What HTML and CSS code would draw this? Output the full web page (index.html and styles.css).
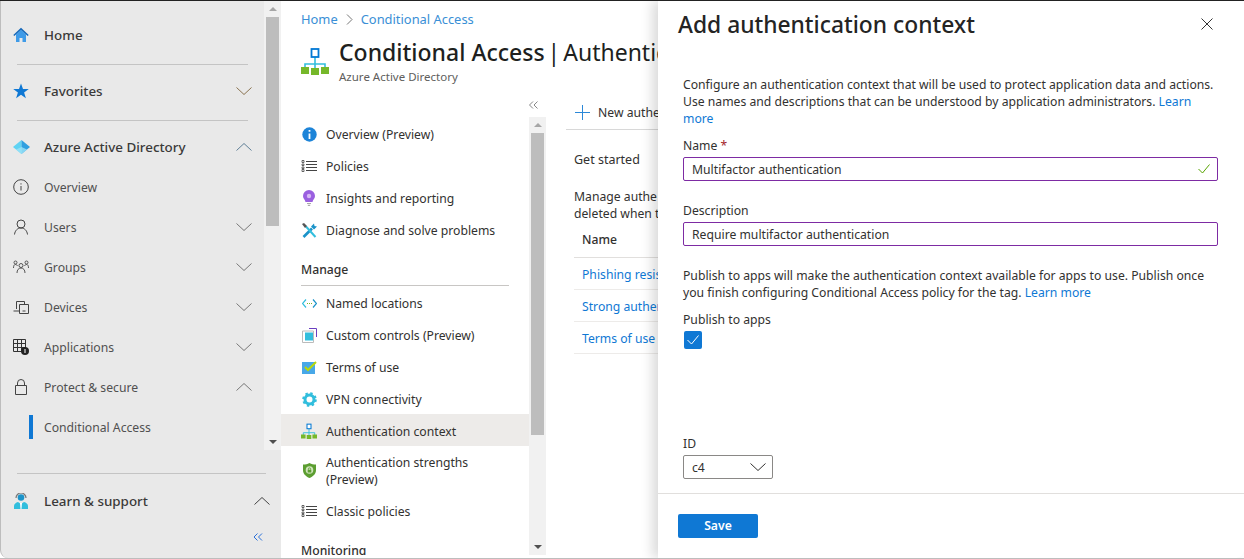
FILE: index.html
```html
<!DOCTYPE html>
<html lang="en">
<head>
    <title>Conditional Access | Authentication context</title>
    <link rel="stylesheet" href="styles.css">
</head>
<body>
<svg class="defs" width="0" height="0">
    <symbol id="chev-down" viewBox="0 0 16 8"><path d="M.5.5 8 7.5 15.5.5" fill="none" stroke="currentColor"/></symbol>
    <symbol id="chev-up" viewBox="0 0 16 8"><path d="M.5 7.5 8 .5l7.5 7" fill="none" stroke="currentColor"/></symbol>
    <symbol id="list" viewBox="0 0 16 12"><path d="M5 1.500h11M5 4.500h11M5 7.500h11M5 10.500h11" stroke="#444"/><path d="M1 .5h2v2H1zM1 4h2v1.500H1zM1 7h2v1.500H1zM1 9.500h2v2H1z" fill="none" stroke="#444" stroke-width=".8"/></symbol>
    <symbol id="tree" viewBox="0 0 28 28"><path d="M14 10v7M4 21v-4h20v4M14 17v4" fill="none" stroke="#32bedd" stroke-width="1.600"/><rect x="10.500" y="2" width="7" height="8" fill="#fff" stroke="#0078d4" stroke-width="1.800"/><path d="M0 20h8v7H0zM10 21h8v7h-8zM20 20h8v7h-8z" fill="#76b82a"/></symbol>
</svg>
<div class="window">
    <aside class="side">
        <div class="side-top">
            <nav class="side-list">
                <a class="nav-row nav-strong nav-first">
                    <span class="nav-icon"><svg width="16" height="16" viewBox="0 0 16 16"><path d="M3 7.500V15h3.500v-4h3v4H13V7.500L8 2.500z" fill="#3f9be8"/><path d="M.3 8 8 .8 15.700 8l-1 .9L8 2.800 1.300 8.900z" fill="#1467b8"/></svg></span>
                    <span>Home</span>
                </a>
                <div class="nav-rule"></div>
                <a class="nav-row nav-strong">
                    <span class="nav-icon"><svg width="16" height="16" viewBox="0 0 16 16"><path d="M8 .5 10 6h5.800l-4.700 3.500 1.800 5.800L8 11.800l-4.900 3.500 1.800-5.800L.2 6H6z" fill="#0f78d4"/></svg></span>
                    <span class="nav-text">Favorites</span>
                    <svg class="chev chev-warm" width="16" height="8"><use href="#chev-down"/></svg>
                </a>
                <div class="nav-rule"></div>
                <a class="nav-row nav-strong">
                    <span class="nav-icon"><svg width="17" height="14" viewBox="0 0 17 14"><path d="M8.500 0 0 7l8.500 7z" fill="#5fd3f3"/><path d="M8.500 0 17 7l-8.500 7z" fill="#2f9fe0"/><path d="M8.500 7 3 9.500 8.500 14 14 9.500z" fill="#9be4f7" opacity=".8"/></svg></span>
                    <span class="nav-text">Azure Active Directory</span>
                    <svg class="chev chev-cool" width="16" height="8"><use href="#chev-up"/></svg>
                </a>
                <a class="nav-row nav-tight">
                    <span class="nav-icon"><svg width="16" height="16" viewBox="0 0 16 16"><circle cx="8" cy="8" r="7.300" fill="none" stroke="#444"/><path d="M8 7v4.500M8 4.300v1.200" stroke="#444"/></svg></span>
                    <span class="nav-text">Overview</span>
                </a>
                <a class="nav-row">
                    <span class="nav-icon"><svg width="16" height="16" viewBox="0 0 16 16"><circle cx="8" cy="5" r="4" fill="none" stroke="#444"/><path d="M1.500 15.500c.5-4 3-6.500 6.500-6.500s6 2.500 6.500 6.500" fill="none" stroke="#444"/></svg></span>
                    <span class="nav-text">Users</span>
                    <svg class="chev" width="16" height="8"><use href="#chev-down"/></svg>
                </a>
                <a class="nav-row">
                    <span class="nav-icon"><svg width="16" height="14" viewBox="0 0 16 14"><g fill="none" stroke="#444" stroke-width=".9"><circle cx="8" cy="5.500" r="2"/><circle cx="2.500" cy="2.500" r="1.500"/><circle cx="13.500" cy="2.500" r="1.500"/><path d="M4 13c0-3 1.500-5 4-5s4 2 4 5M.5 8c0-2 .5-3.500 2-3.500 1 0 1.500.5 2 1.500M15.500 8c0-2-.5-3.500-2-3.500-1 0-1.500.5-2 1.500"/></g></svg></span>
                    <span class="nav-text">Groups</span>
                    <svg class="chev" width="16" height="8"><use href="#chev-down"/></svg>
                </a>
                <a class="nav-row">
                    <span class="nav-icon"><svg width="16" height="13" viewBox="0 0 16 13"><g fill="none" stroke="#444"><path d="M3.500 8V.5h8V3M.5 10h6"/><path d="M6.500 3.500h9v9h-9z" fill="#e9e9e9"/><path d="M9.500 10h3"/></g></svg></span>
                    <span class="nav-text">Devices</span>
                    <svg class="chev" width="16" height="8"><use href="#chev-down"/></svg>
                </a>
                <a class="nav-row">
                    <span class="nav-icon"><svg width="16" height="16" viewBox="0 0 16 16"><g fill="none" stroke="#333"><path d="M.5.500h12v12H.5zM.5 4.500h12M.5 8.500h12M4.500.5v12M8.500.5v12"/></g><circle cx="12" cy="12" r="4" fill="#222"/><path d="M12 10v4" stroke="#fff"/></svg></span>
                    <span class="nav-text">Applications</span>
                    <svg class="chev" width="16" height="8"><use href="#chev-down"/></svg>
                </a>
                <a class="nav-row">
                    <span class="nav-icon"><svg width="12" height="16" viewBox="0 0 12 16"><path d="M.5 6.500h11v9H.5zM2.500 6.500V4a3.500 3.500 0 0 1 7 0v2.500" fill="none" stroke="#444"/></svg></span>
                    <span class="nav-text">Protect &amp; secure</span>
                    <svg class="chev" width="16" height="8"><use href="#chev-up"/></svg>
                </a>
                <a class="nav-row nav-sub">
                    <span class="nav-bar"></span>
                    <span class="nav-text">Conditional Access</span>
                </a>
            </nav>
            <div class="scrollbar side-scrollbar">
                <span class="arrow-up"></span>
                <span class="thumb side-thumb"></span>
                <span class="arrow-down"></span>
            </div>
        </div>
        <div class="nav-rule nav-rule-wide"></div>
        <a class="nav-row nav-strong nav-learn">
            <span class="nav-icon"><svg width="14" height="16" viewBox="0 0 14 16"><path d="M0 16v-3c0-2 2-3.500 4-4l3 2 3-2c2 .5 4 2 4 4v3z" fill="#32bedd"/><path d="M6 10h2l-.5 6h-1z" fill="#fff"/><circle cx="7" cy="4.500" r="3.300" fill="#1b93c9"/><path d="M2 5a5 5 0 0 1 10 0" fill="none" stroke="#777" stroke-width="1.200"/></svg></span>
            <span class="nav-text">Learn &amp; support</span>
            <svg class="chev chev-dark" width="16" height="8"><use href="#chev-up"/></svg>
        </a>
        <div class="side-collapse">
            <svg width="10" height="8" viewBox="0 0 10 8"><path d="M4.500.5 1 4l3.500 3.500M9 .5 5.500 4 9 7.500" fill="none" stroke="#2b70d8"/></svg>
        </div>
    </aside>

    <main class="main">
        <header class="main-head">
            <div class="crumbs"><a>Home</a><svg width="7" height="11" viewBox="0 0 7 11"><path d="m1 .5 5 5-5 5" fill="none" stroke="#777"/></svg><a>Conditional Access</a></div>
            <div class="title-row">
                <svg class="title-icon" width="28" height="28"><use href="#tree"/></svg>
                <div>
                    <h1 class="title"><b>Conditional Access</b> <span class="title-rest">| Authentic</span></h1>
                    <div class="subtitle">Azure Active Directory</div>
                </div>
            </div>
        </header>
        <div class="main-body">
            <div class="menu-col">
                <div class="menu-collapse"><svg width="9" height="8" viewBox="0 0 9 8"><path d="M4 .5.500 4 4 7.500M8.500.5 5 4l3.500 3.500" fill="none" stroke="#888"/></svg></div>
                <div class="menu-wrap">
                    <ul class="menu">
                        <li class="menu-item"><span class="menu-icon"><svg width="15" height="15" viewBox="0 0 15 15"><circle cx="7.500" cy="7.500" r="7.200" fill="#1d84d8"/><path d="M7.500 6.500V12M7.500 3v1.800" stroke="#fff" stroke-width="1.800"/></svg></span>Overview (Preview)</li>
                        <li class="menu-item"><span class="menu-icon"><svg width="16" height="12"><use href="#list"/></svg></span>Policies</li>
                        <li class="menu-item"><span class="menu-icon"><svg width="12" height="16" viewBox="0 0 12 16"><path d="M6 0a6 6 0 0 1 6 6c0 2.500-2 3.500-2.500 6h-7C2 9.500 0 8.500 0 6a6 6 0 0 1 6-6z" fill="#9a5fe0"/><circle cx="6" cy="6" r="2.200" fill="#d7b8f5"/><path d="M4 13.500h4M4.800 15.300h2.400" stroke="#aaa" stroke-width="1.200"/></svg></span>Insights and reporting</li>
                        <li class="menu-item"><span class="menu-icon"><svg width="15" height="15" viewBox="0 0 15 15"><path d="M1.500 14 10 5.500" stroke="#1b93c9" stroke-width="2.600"/><path d="M13.500 14 4 3.500" stroke="#32bedd" stroke-width="2"/><path d="M9 3.500 12 .5l.5 2.500 2.500.5-3 3z" fill="#1b93c9"/><path d="M0 1l2-1 3 3-2 2z" fill="#555"/></svg></span>Diagnose and solve problems</li>
                        <li class="menu-head">Manage</li>
                        <li class="menu-item"><span class="menu-icon"><svg width="15" height="9" viewBox="0 0 15 9"><path d="M4 .5.500 4.500 4 8.500" fill="none" stroke="#32bedd" stroke-width="1.200"/><path d="m11 .5 3.500 4-3.500 4" fill="none" stroke="#1b93c9" stroke-width="1.200"/><path d="M5 4.500h1M7 4.500h1M9 4.500h1" stroke="#76b82a"/></svg></span>Named locations</li>
                        <li class="menu-item"><span class="menu-icon"><svg width="15" height="15" viewBox="0 0 15 15"><path d="M.5 3h11v11.500H.5z" fill="#fff" stroke="#bbb"/><path d="M3 4.500h8v8H3z" fill="#32bedd"/><path d="M7 .5h7.500V9" fill="none" stroke="#6b3fc0"/></svg></span>Custom controls (Preview)</li>
                        <li class="menu-item"><span class="menu-icon"><svg width="15" height="13" viewBox="0 0 15 13"><path d="M0 1h13v12H0z" fill="#48a8e8"/><path d="m3 6 3 3 8-8" fill="none" stroke="#bad80a" stroke-width="2"/></svg></span>Terms of use</li>
                        <li class="menu-item"><span class="menu-icon"><svg width="15" height="15" viewBox="0 0 15 15"><circle cx="7.500" cy="7.500" r="4.500" fill="#fff" stroke="#32bedd" stroke-width="3"/><circle cx="7.500" cy="7.500" r="6.200" fill="none" stroke="#32bedd" stroke-width="2.200" stroke-dasharray="2.400 2.470"/></svg></span>VPN connectivity</li>
                        <li class="menu-item menu-active"><span class="menu-icon"><svg width="16" height="16" viewBox="0 0 28 28"><use href="#tree"/></svg></span>Authentication context</li>
                        <li class="menu-item menu-item-tall"><span class="menu-icon"><svg width="13" height="15" viewBox="0 0 13 15"><path d="M6.500 0c2 1.200 4 1.500 6.500 1.500V7c0 4-3 6.500-6.500 8C3 13.500 0 11 0 7V1.500C2.500 1.500 4.500 1.200 6.500 0z" fill="#5c9e31"/><circle cx="6.500" cy="7" r="3.800" fill="#cfe3bb"/><path d="M4.700 6.800h3.600v2.700H4.700z" fill="#5c9e31"/><path d="M5.400 6.800V6a1.100 1.100 0 0 1 2.200 0v.8" fill="none" stroke="#5c9e31" stroke-width=".8"/></svg></span><span>Authentication strengths<br>(Preview)</span></li>
                        <li class="menu-item menu-item-last"><span class="menu-icon"><svg width="16" height="12"><use href="#list"/></svg></span>Classic policies</li>
                        <li class="menu-head menu-head-plain">Monitoring</li>
                    </ul>
                    <div class="scrollbar menu-scrollbar">
                        <span class="arrow-up"></span>
                        <span class="thumb menu-thumb"></span>
                        <span class="arrow-down"></span>
                    </div>
                </div>
            </div>
            <section class="content">
                <div class="toolbar"><svg width="15" height="15" viewBox="0 0 15 15"><path d="M7.500 0v15M0 7.500h15" stroke="#2b88d8"/></svg>New authe</div>
                <div class="content-inner">
                    <h2 class="get-started">Get started</h2>
                    <p class="intro">Manage authe<br>deleted when t</p>
                    <div class="table-head">Name</div>
                    <div class="table-row"><a>Phishing resis</a></div>
                    <div class="table-row"><a>Strong authen</a></div>
                    <div class="table-row"><a>Terms of use</a></div>
                </div>
            </section>
        </div>
    </main>

    <aside class="panel">
        <header class="panel-head">
            <h2 class="panel-title">Add authentication context</h2>
            <svg width="12" height="12" viewBox="0 0 12 12"><path d="m.5.500 11 11M11.500.5l-11 11" stroke="#333"/></svg>
        </header>
        <form class="panel-body" action="">
            <p class="panel-text">Configure an authentication context that will be used to protect application data and actions. Use names and descriptions that can be understood by application administrators. <a>Learn more</a></p>
            <label class="field-label field-name">Name <span class="req">*</span></label>
            <div class="input input-check">Multifactor authentication<svg width="12" height="10" viewBox="0 0 12 10"><path d="m.5 5 4 4L11.500.5" fill="none" stroke="#57a300"/></svg></div>
            <label class="field-label field-desc">Description</label>
            <div class="input">Require multifactor authentication</div>
            <p class="panel-text panel-text-publish">Publish to apps will make the authentication context available for apps to use. Publish once you finish configuring Conditional Access policy for the tag. <a>Learn more</a></p>
            <label class="field-label field-publish">Publish to apps</label>
            <span class="checkbox"><svg width="12" height="10" viewBox="0 0 12 10"><path d="m.5 5 4 4L11.500.5" fill="none" stroke="#fff"/></svg></span>
            <label class="field-label field-id">ID</label>
            <div class="select">c4<svg width="16" height="8"><use href="#chev-down"/></svg></div>
        </form>
        <footer class="panel-foot"><button type="button" class="save">Save</button></footer>
    </aside>
</div>
</body>
</html>
```
FILE: styles.css
```css
html, body {
    margin: 0;
    height: 100%;
    overflow: hidden;
}

body {
    font-family: "Noto Sans", "Open Sans", sans-serif;
    font-size: 12.2px;
    color: #323130;
    background: #fff;
}

.defs {
    position: absolute;
}

h1, h2, p, ul {
    margin: 0;
    padding: 0;
}

a {
    color: #0f78d4;
}

.window {
    display: flex;
    height: 559px;
    box-sizing: border-box;
    border-top: 1px solid #222;
    border-bottom: 1px solid #bdbdbd;
    overflow: hidden;
}

/* left nav */
.side {
    width: 281px;
    flex: none;
    display: flex;
    flex-direction: column;
    background: #e9e9e9;
    border-left: 1px solid #bdbdbd;
    border-bottom-left-radius: 8px;
    box-sizing: border-box;
}

.side-top {
    display: flex;
    height: 449px;
    flex: none;
}

.side-list {
    flex: 1;
    padding-top: 13px;
    min-width: 0;
    overflow: hidden;
}

.nav-row {
    display: flex;
    align-items: center;
    height: 40px;
    padding-left: 10px;
    padding-right: 12px;
    color: #505050;
}

.nav-strong {
    color: #3b3a39;
    font-size: 13.4px;
    font-weight: 500;
    height: 38px;
    padding-top: 2px;
}

.nav-tight {
    margin-top: 1px;
}

.nav-icon {
    width: 20px;
    margin-right: 13px;
    display: flex;
    justify-content: center;
    flex: none;
}

.nav-text {
    flex: 1;
}

.nav-sub {
    padding-left: 28px;
}

.nav-bar {
    width: 4px;
    height: 24px;
    background: #0f78d4;
    margin-right: 11px;
}

.chev {
    color: #777;
    flex: none;
}

.chev-warm {
    color: #8a7350;
}

.chev-cool {
    color: #5f7f96;
}

.chev-dark {
    color: #444;
}

.nav-rule {
    height: 1px;
    background: #c4c4c4;
    margin: 10px 16px 5px 16px;
}

.nav-rule-wide {
    margin: 23px 15px 6px 16px;
}

.nav-learn {
    padding-right: 11px;
}

.side-collapse {
    display: flex;
    justify-content: flex-end;
    padding: 13px 18px 0 0;
}

/* scrollbars */
.scrollbar {
    display: flex;
    flex-direction: column;
    align-items: center;
    width: 17px;
    flex: none;
    background: #f1f1f1;
}

.thumb {
    background: #bdbdbd;
    width: 13px;
    flex: none;
}

.arrow-up, .arrow-down {
    width: 0;
    height: 0;
    border-left: 4px solid transparent;
    border-right: 4px solid transparent;
    margin: 6px 0;
}

.arrow-up {
    border-bottom: 4px solid #a6a6a6;
}

.arrow-down {
    border-top: 4px solid #505050;
    margin-top: auto;
}

.side-thumb {
    height: 209px;
}

.menu-thumb {
    height: 302px;
}

/* main blade */
.main {
    width: 377px;
    flex: none;
    display: flex;
    flex-direction: column;
    overflow: hidden;
}

.main-head {
    padding: 10px 0 0 20px;
    height: 96px;
    box-sizing: border-box;
    white-space: nowrap;
}

.crumbs {
    display: flex;
    align-items: center;
    gap: 8px;
    font-size: 12.900px;
    height: 16px;
}

.crumbs a {
    color: #3a8fd6;
}

.title-row {
    display: flex;
    align-items: flex-start;
    margin-top: 9px;
}

.title-icon {
    margin: 11px 10px 0 0;
    flex: none;
}

.title {
    font-size: 23px;
    font-weight: 400;
    line-height: 33px;
    color: #201f1e;
}

.title b {
    font-weight: 500;
}

.title-rest {
    margin-left: -3px;
    word-spacing: -3px;
}

.subtitle {
    font-size: 11.500px;
    color: #605e5c;
    line-height: 16px;
}

.main-body {
    display: flex;
    flex: 1;
    min-height: 0;
}

.menu-col {
    width: 265px;
    flex: none;
    display: flex;
    flex-direction: column;
}

.menu-collapse {
    height: 20px;
    padding: 4px 8px 0 0;
    box-sizing: border-box;
    display: flex;
    justify-content: flex-end;
}

.menu-wrap {
    display: flex;
    flex: 1;
    min-height: 0;
    padding-bottom: 3px;
}

.menu {
    list-style: none;
    width: 248px;
    flex: none;
    overflow: hidden;
}

.menu-item {
    display: flex;
    align-items: center;
    height: 30px;
    padding: 2px 0 0 20px;
    color: #323130;
}

.menu-item-tall {
    height: 49px;
    padding-top: 0;
}

.menu-item-last {
    height: 32px;
    padding-top: 0;
}

.menu-active {
    background: #edebe9;
}

.menu-icon {
    width: 16px;
    margin-right: 9px;
    display: flex;
    justify-content: center;
    flex: none;
}

.menu-head {
    display: flex;
    align-items: center;
    height: 32px;
    margin: 8px 20px 0 20px;
    font-weight: 500;
    border-bottom: 1px solid #c8c6c4;
}

.menu-head-plain {
    border-bottom: 0;
    margin-top: 7px;
}

/* content, cut off by the panel */
.content {
    flex: 1;
    min-width: 0;
    padding-left: 20px;
    white-space: nowrap;
}

.toolbar {
    display: flex;
    align-items: center;
    gap: 8px;
    height: 30px;
    padding: 0 0 2px 9px;
    border-bottom: 1px solid #d8d8d8;
}

.toolbar svg {
    flex: none;
}

.content-inner {
    padding-left: 8px;
}

.get-started {
    font-size: 12.500px;
    font-weight: 400;
    margin-top: 21px;
    line-height: 17px;
}

.intro {
    margin-top: 20px;
    line-height: 17px;
}

.table-head {
    height: 35px;
    display: flex;
    align-items: center;
    padding-left: 8px;
    font-weight: 500;
    border-bottom: 1px solid #e1dfdd;
}

.table-row {
    height: 29px;
    display: flex;
    align-items: center;
    padding: 2px 0 0 8px;
    border-bottom: 1px solid #edebe9;
}

/* right panel */
.panel {
    position: relative;
    flex: 1;
    min-width: 0;
    display: flex;
    flex-direction: column;
    background: #fff;
    box-shadow: -6px 0 12px rgba(0, 0, 0, 0.14);
    border-bottom-right-radius: 8px;
}

.panel-head {
    display: flex;
    justify-content: space-between;
    align-items: center;
    height: 46px;
    padding: 0 31px 0 20px;
}

.panel-title {
    font-size: 22.800px;
    font-weight: 500;
    color: #242424;
}

.panel-body {
    flex: 1;
    padding: 29px 26px 0 25px;
}

.panel-text {
    line-height: 17px;
    color: #323130;
}

.field-label {
    display: block;
    line-height: 17px;
    margin-bottom: 3px;
}

.field-name {
    margin-top: 10px;
}

.field-desc {
    margin-top: 21px;
}

.field-publish {
    margin-top: 10px;
}

.field-id {
    margin-top: 86px;
}

.req {
    color: #a4262c;
}

.input {
    display: flex;
    align-items: center;
    justify-content: space-between;
    height: 24px;
    box-sizing: border-box;
    padding: 0 7px 0 8px;
    border: 1px solid #7d2ba3;
    border-radius: 2px;
}

.panel-text-publish {
    margin-top: 21px;
}

.checkbox {
    display: flex;
    align-items: center;
    justify-content: center;
    width: 18px;
    height: 18px;
    margin-left: 1px;
    background: #0f78d4;
    border-radius: 2px;
}

.select {
    display: flex;
    align-items: center;
    justify-content: space-between;
    width: 90px;
    height: 24px;
    box-sizing: border-box;
    padding: 0 6px 0 8px;
    border: 1px solid #8a8886;
    border-radius: 2px;
}

.panel-foot {
    height: 65px;
    box-sizing: border-box;
    border-top: 1px solid #e1dfdd;
    padding: 20px 0 0 20px;
}

.save {
    width: 80px;
    height: 24px;
    padding: 0 0 2px;
    border: 0;
    border-radius: 2px;
    background: #0f78d4;
    color: #fff;
    font: 600 12.2px "Noto Sans", sans-serif;
}
```
